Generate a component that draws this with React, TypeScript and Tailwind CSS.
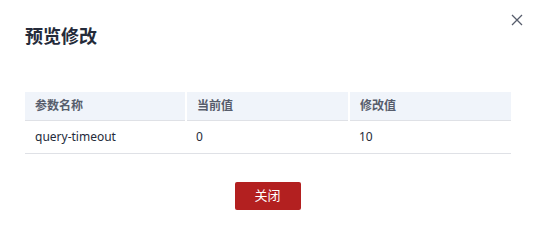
const rows = [{ name: 'query-timeout', current: '0', next: '10' }]

export default function App() {
  return (
    <div
      className="relative h-[229px] w-[535px] bg-white px-[25px] pt-[24px]"
      style={{ fontFamily: '"Noto Sans", "Noto Sans CJK SC", sans-serif' }}
    >
      {/* Close */}
      <button className="absolute right-[12px] top-[14px] text-[#575d6c]">
        <svg width="12" height="12" viewBox="0 0 12 12" fill="none" stroke="currentColor" strokeWidth="1.3">
          <path d="M1 1L11 11M11 1L1 11" />
        </svg>
      </button>

      <h2 className="text-[18px] font-bold leading-[24px] text-[#252b3a]">预览修改</h2>

      <table className="mt-[44px] w-[486px] table-fixed border-collapse text-[12px]">
        <thead>
          <tr className="border-b border-[#dfe1e6] bg-[#f0f4fa] text-[#575d6c]">
            <th className="h-[28px] w-[161px] border-r-2 border-white px-[10px] text-left font-bold">参数名称</th>
            <th className="h-[28px] w-[163px] border-r-2 border-white px-[10px] text-left font-bold">当前值</th>
            <th className="h-[28px] px-[10px] text-left font-bold">修改值</th>
          </tr>
        </thead>
        <tbody>
          {rows.map((r) => (
            <tr key={r.name} className="border-b border-[#dfe1e6] text-[#252b3a]">
              <td className="h-[33px] px-[10px]">{r.name}</td>
              <td className="h-[33px] px-[10px]">{r.current}</td>
              <td className="h-[33px] px-[10px]">{r.next}</td>
            </tr>
          ))}
        </tbody>
      </table>

      <div className="mt-[28px] flex justify-center">
        <button className="h-[28px] w-[66px] rounded-[2px] bg-[#b32020] text-[13px] text-white">关闭</button>
      </div>
    </div>
  )
}
